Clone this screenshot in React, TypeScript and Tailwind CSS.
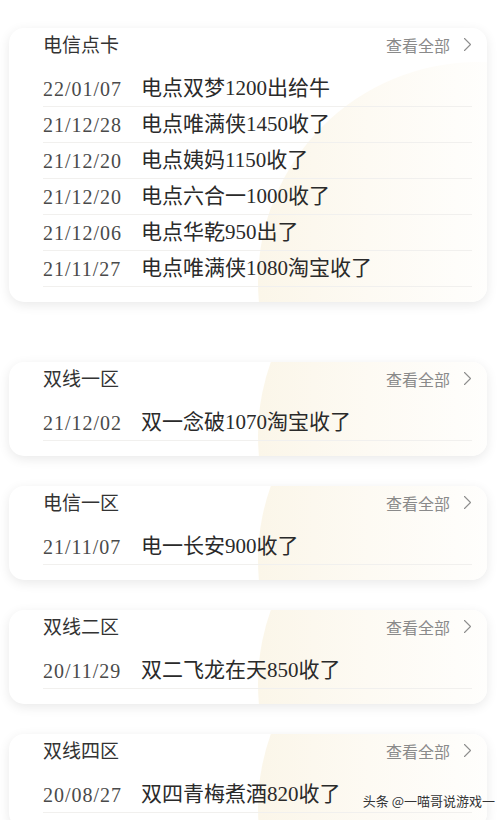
import React from "react";

interface Deal {
    date: string;
    text: string;
}

interface Section {
    title: string;
    deals: Deal[];
}

const sections: Section[] = [
    {
        title: "电信点卡",
        deals: [
            { date: "22/01/07", text: "电点双梦1200出给牛" },
            { date: "21/12/28", text: "电点唯满侠1450收了" },
            { date: "21/12/20", text: "电点姨妈1150收了" },
            { date: "21/12/20", text: "电点六合一1000收了" },
            { date: "21/12/06", text: "电点华乾950出了" },
            { date: "21/11/27", text: "电点唯满侠1080淘宝收了" },
        ],
    },
    { title: "双线一区", deals: [{ date: "21/12/02", text: "双一念破1070淘宝收了" }] },
    { title: "电信一区", deals: [{ date: "21/11/07", text: "电一长安900收了" }] },
    { title: "双线二区", deals: [{ date: "20/11/29", text: "双二飞龙在天850收了" }] },
    { title: "双线四区", deals: [{ date: "20/08/27", text: "双四青梅煮酒820收了" }] },
];

const Chevron = () => (
    <svg width="9" height="15" viewBox="0 0 9 15" fill="none">
        <path d="M1.5 1.5L7.5 7.5l-6 6" stroke="#8e8e8e" strokeWidth="1.1" strokeLinecap="round" strokeLinejoin="round" />
    </svg>
);

const SectionCard: React.FC<{ section: Section }> = ({ section }) => (
    <div className="relative overflow-hidden rounded-[15px] bg-white pl-[34px] pr-[15px] pb-[15px] shadow-[0_3px_12px_rgba(0,0,0,0.09)]">
        {/* pale decoration */}
        <div className="pointer-events-none absolute right-[-211px] bottom-[-200px] h-[440px] w-[440px] rounded-full bg-[linear-gradient(90deg,#fbf6e9_0%,#fdfaf3_25%,#fefdfa_45%,#ffffff_60%)]" />

        <div className="relative z-10">
            {/* Header */}
            <div className="flex h-[33px] items-center justify-between">
                <span className="text-[19px] text-[#333] [font-family:'Noto_Sans_CJK_SC',sans-serif]">
                    {section.title}
                </span>
                <span className="flex items-center gap-[13px] text-[16px] text-[#8a8a8a] [font-family:'Noto_Sans_CJK_SC',sans-serif]">
                    查看全部
                    <Chevron />
                </span>
            </div>

            {/* Deals */}
            <div className="mt-[10px]">
                {section.deals.map((d, i) => (
                    <div key={i} className="flex h-[36px] items-center border-b border-[#f1f0ee]">
                        <span className="w-[98px] shrink-0 text-[20px] tracking-[1px] text-[#4a4a4a] [font-family:'Liberation_Serif',serif]">
                            {d.date}
                        </span>
                        <span className="text-[21px] text-[#2a2a2a] [font-family:'Liberation_Serif','Noto_Sans_CJK_SC',serif]">
                            {d.text}
                        </span>
                    </div>
                ))}
            </div>
        </div>
    </div>
);

export default function App() {
    return (
        <div className="relative min-h-[820px] overflow-hidden bg-white">
            <div className="flex flex-col px-[9px] pt-[28px] pr-[17px]">
                <SectionCard section={sections[0]} />
                <div className="mt-[60px] flex flex-col gap-[30px]">
                    {sections.slice(1).map((s) => (
                        <SectionCard key={s.title} section={s} />
                    ))}
                </div>
            </div>

            {/* Watermark */}
            <div className="absolute right-[9px] top-[791px] z-20 text-[13px] text-[#333] [font-family:'Noto_Sans_CJK_SC',sans-serif] [text-shadow:0_0_2px_#fff,0_0_2px_#fff]">
                头条 @一喵哥说游戏一
            </div>
        </div>
    );
}
